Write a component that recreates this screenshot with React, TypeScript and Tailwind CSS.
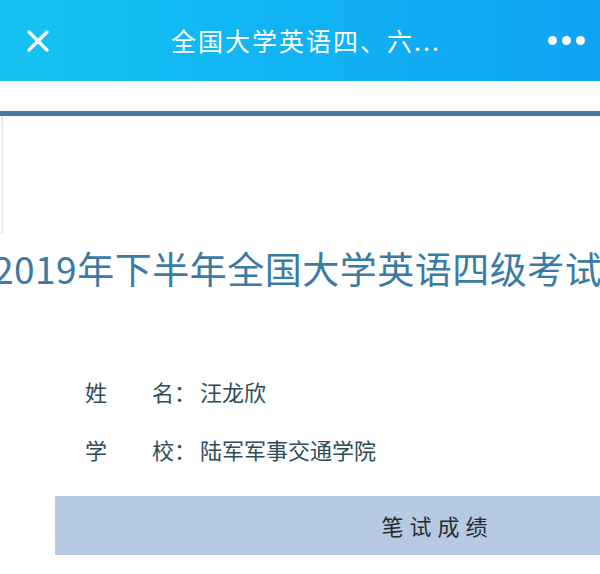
import { X } from 'lucide-react';

const CJK = { fontFamily: '"Noto Sans CJK SC", "Noto Sans", sans-serif' };

function InfoRow({ a, b, value }: { a: string; b: string; value: string }) {
  return (
    <div className="flex items-center h-[58px] text-[22px] text-[#2c4c58]">
      <span className="w-[67px]">{a}</span>
      <span>{b}：</span>
      <span className="ml-[4px]">{value}</span>
    </div>
  );
}

export default function App() {
  return (
    <div className="w-[600px] h-[574px] overflow-hidden bg-white" style={CJK}>
      {/* top bar */}
      <div className="h-[81px] flex items-center bg-gradient-to-r from-[#17c2f1] to-[#0fa3f5] pl-[20px] pr-[15px]">
        <X className="w-[36px] h-[36px] text-white" strokeWidth={2.2} />
        <div className="flex-1 text-center text-white text-[25px] tracking-[2px] pl-[8px]">全国大学英语四、六...</div>
        <div className="flex gap-[5px]">
          <span className="w-[9px] h-[9px] rounded-full bg-white" />
          <span className="w-[9px] h-[9px] rounded-full bg-white" />
          <span className="w-[9px] h-[9px] rounded-full bg-white" />
        </div>
      </div>

      <div className="h-[30px]" />
      <div className="h-[5px] bg-[#4a79a2]" />

      {/* title */}
      <div className="h-[118px] ml-[1px] border-l-2 border-[#ececec]" />
      <div className="h-[70px] flex items-center whitespace-nowrap">
        <span className="ml-[-7px] text-[37px] text-[#3a7aa3] tracking-[0.5px]">2019年下半年全国大学英语四级考试成绩单</span>
      </div>

      <div className="h-[58px]" />
      <div className="pl-[85px]">
        <InfoRow a="姓" b="名" value="汪龙欣" />
        <InfoRow a="学" b="校" value="陆军军事交通学院" />
      </div>

      <div className="mt-[18px] ml-[55px] w-[765px] h-[59px] bg-[#b6cbe3] flex items-center justify-center">
        <span className="text-[22px] text-[#2b2b2b] tracking-[6px]">笔试成绩</span>
      </div>
    </div>
  );
}
